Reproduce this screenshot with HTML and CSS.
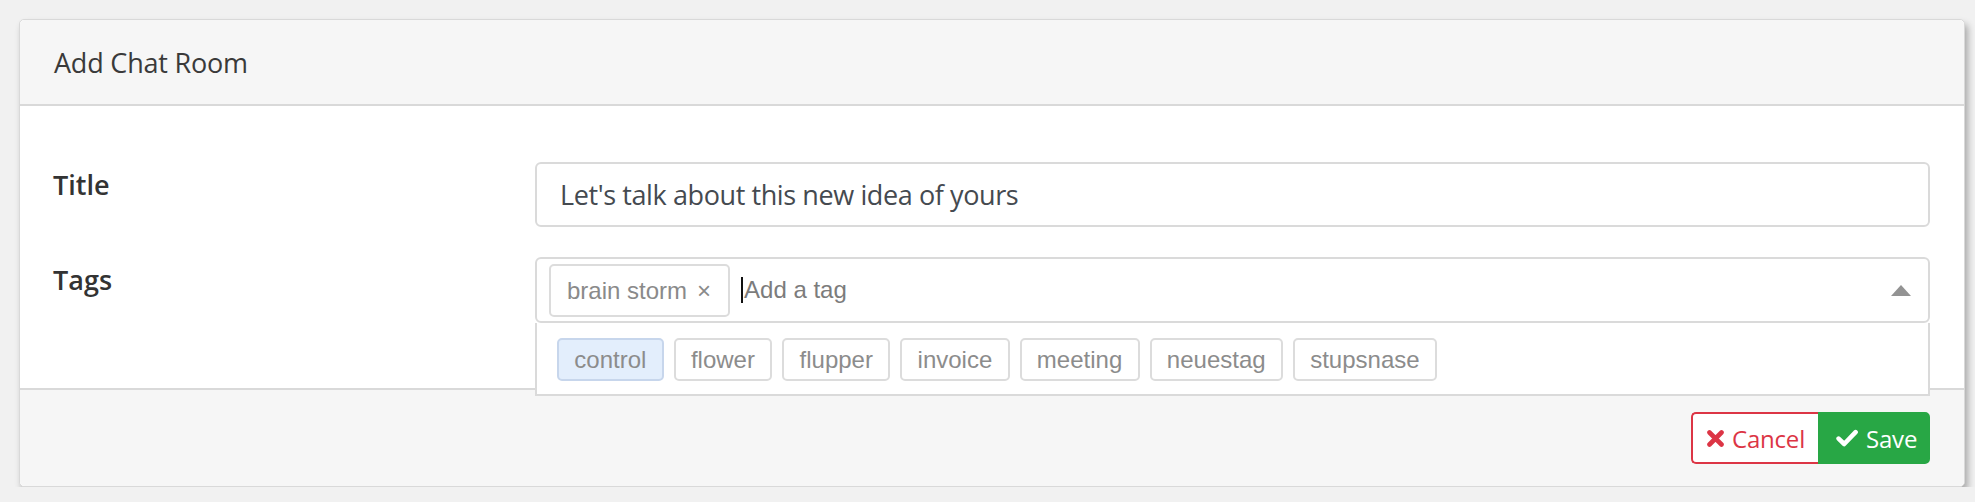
FILE: index.html
```html
<!DOCTYPE html>
<html>
<head>
<meta charset="utf-8">
<link rel="stylesheet" href="styles.css">
</head>
<body>
<div class="modal">
  <div class="modal-header"><h5 class="modal-title">Add Chat Room</h5></div>
  <div class="modal-body">
    <div class="form-row">
      <label class="form-label">Title</label>
      <div class="form-control">Let's talk about this new idea of yours</div>
    </div>
    <div class="form-row">
      <label class="form-label">Tags</label>
      <div class="tags-wrap">
        <div class="tags-input">
          <span class="chip">brain storm <span class="chip-x">×</span></span>
          <span class="caret"></span>
          <span class="placeholder">Add a tag</span>
          <span class="arrow"></span>
        </div>
        <div class="dropdown">
          <span class="chip option active">control</span>
          <span class="chip option">flower</span>
          <span class="chip option">flupper</span>
          <span class="chip option">invoice</span>
          <span class="chip option">meeting</span>
          <span class="chip option">neuestag</span>
          <span class="chip option">stupsnase</span>
        </div>
      </div>
    </div>
  </div>
  <div class="modal-footer">
    <div class="btn-group">
      <button class="btn btn-cancel"><svg class="icon" width="17" height="17" viewBox="0 0 17 17"><path d="M2.5 2.5 L14.5 14.5 M14.5 2.5 L2.5 14.5" stroke="#dc3545" stroke-width="4.6" stroke-linecap="round" fill="none"/></svg>Cancel</button>
      <button class="btn btn-save"><svg class="icon" width="22" height="18" viewBox="0 0 22 18"><path d="M2.6 9.6 L8.2 15 L19.6 3.2" stroke="#fff" stroke-width="4.6" stroke-linecap="round" stroke-linejoin="round" fill="none"/></svg>Save</button>
    </div>
  </div>
</div>
</body>
</html>
```

FILE: styles.css
```css
html, body {
  margin: 0;
  padding: 0;
}
body {
  background: #f1f1f1;
  padding: 19px 10px 0 19px;
  font-family: "Open Sans", "Noto Sans", sans-serif;
  color: #3a3a3a;
}
.modal {
  background: #fff;
  border: 1px solid #d9d9d9;
  border-radius: 5px;
  box-shadow: 3px 5px 7px rgba(0, 0, 0, 0.3);
}
.modal-header {
  background: #f6f6f6;
  border-bottom: 2px solid #d9d9d9;
  border-radius: 5px 5px 0 0;
  height: 84px;
  display: flex;
  align-items: center;
  padding: 0 34px;
}
.modal-title {
  margin: 0;
  font-size: 27px;
  font-weight: 400;
  color: #3a3a3a;
  letter-spacing: -0.2px;
}
.modal-body {
  padding: 56px 34px 65px 33px;
  display: flex;
  flex-direction: column;
  gap: 30px;
}
.form-row {
  display: grid;
  grid-template-columns: 482px 1fr;
}
.form-label {
  font-size: 27px;
  font-weight: 600;
  color: #333;
  padding-top: 3px;
  line-height: 40px;
}
.form-control {
  height: 61px;
  border: 2px solid #dadada;
  border-radius: 6px;
  padding: 0 23px;
  display: flex;
  align-items: center;
  font-size: 27px;
  color: #454a50;
  letter-spacing: -0.4px;
}
.tags-wrap {
  position: relative;
}
.tags-input {
  height: 62px;
  border: 2px solid #dadada;
  border-radius: 6px;
  padding: 0 13px 0 12px;
  display: flex;
  align-items: center;
  font-family: "Liberation Sans", Arial, sans-serif;
  font-size: 24px;
  color: #8a8a8a;
}
.chip {
  display: inline-flex;
  align-items: center;
  border: 2px solid #dcdcdc;
  border-radius: 5px;
  background: #fff;
  font-family: "Liberation Sans", Arial, sans-serif;
  font-size: 24px;
  color: #8a8a8a;
  box-sizing: border-box;
}
.tags-input .chip {
  height: 53px;
  padding: 0 17px 0 16px;
  margin-top: 1px;
}
.chip-x {
  margin-left: 10px;
  font-size: 24px;
}
.caret {
  width: 2px;
  height: 26px;
  background: #111;
  margin-left: 11px;
}
.placeholder {
  margin-left: 1px;
  color: #7c7c7c;
}
.arrow {
  margin-left: auto;
  margin-right: 4px;
  width: 0;
  height: 0;
  border-left: 10.5px solid transparent;
  border-right: 10.5px solid transparent;
  border-bottom: 11px solid #939393;
}
.dropdown {
  position: absolute;
  top: 100%;
  left: 0;
  right: 0;
  background: #fff;
  border: 2px solid #dadada;
  border-top: none;
  padding: 15px 20px 0 20px;
  display: flex;
  gap: 10px;
  align-items: flex-start;
  box-sizing: border-box;
  height: 73px;
}
.option {
  height: 43px;
  padding: 0 15.3px;
  color: #8c8c8c;
}
.option.active {
  background: #e3eefc;
  border-color: #c7d6ec;
}
.modal-footer {
  background: #f6f6f6;
  border-top: 2px solid #d9d9d9;
  border-radius: 0 0 5px 5px;
  padding: 22px 34px 22px 31px;
  display: flex;
  justify-content: flex-end;
}
.btn-group {
  display: flex;
}
.btn {
  height: 52px;
  font-family: "Open Sans", "Noto Sans", sans-serif;
  font-size: 24px;
  display: flex;
  align-items: center;
  gap: 8px;
  box-sizing: border-box;
  cursor: pointer;
  letter-spacing: -0.2px;
}
.btn-cancel {
  background: #fff;
  color: #dc3545;
  border: 2px solid #dc3545;
  border-right: none;
  border-radius: 5px 0 0 5px;
  padding: 0 12px 0 14px;
  width: 127px;
}
.btn-save {
  background: #28a745;
  color: #fff;
  border: 2px solid #28a745;
  border-radius: 0 5px 5px 0;
  padding: 0 14px 0 16px;
  width: 112px;
}
.icon {
  flex: none;
}
```
